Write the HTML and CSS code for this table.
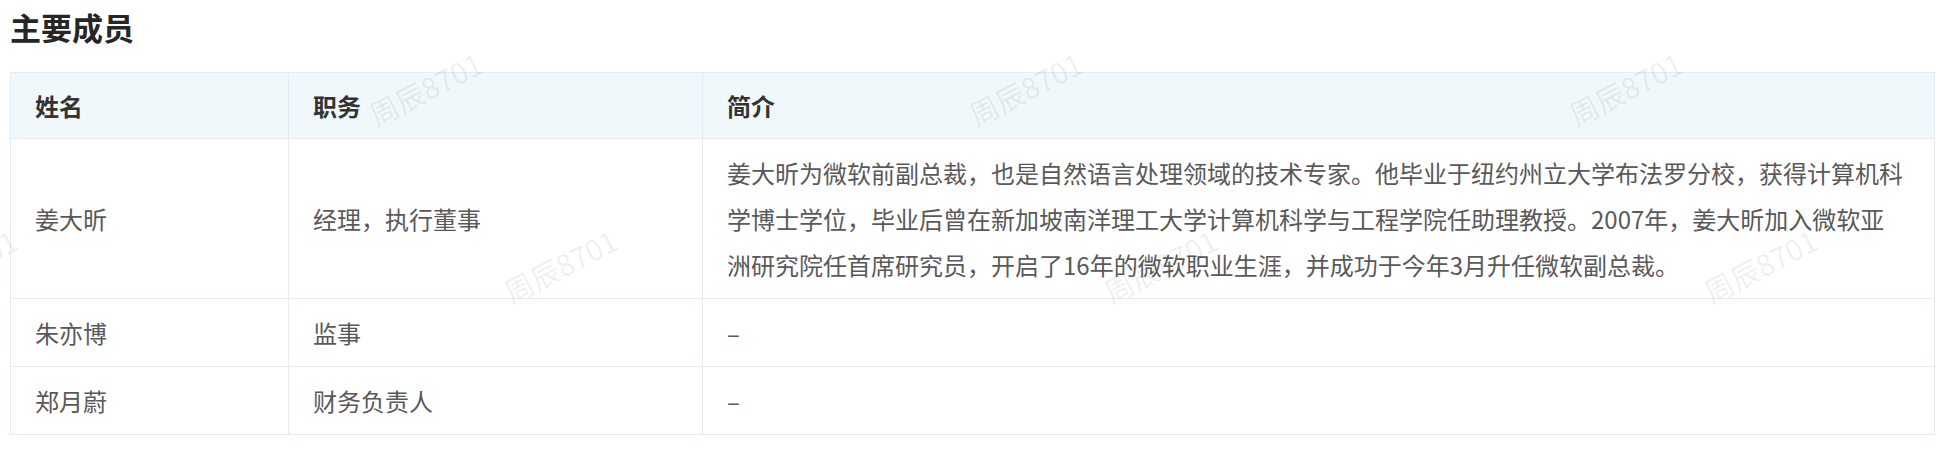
FILE: index.html
```html
<!DOCTYPE html>
<html lang="zh-CN">
<head>
  <meta charset="UTF-8" />
  <meta name="viewport" content="width=device-width, initial-scale=1.0"/>
  <title>主要成员</title>
  <link rel="stylesheet" href="styles.css">
</head>
<body>

  <h2 class="title">主要成员</h2>

  <table class="members">
    <colgroup>
      <col class="col-name">
      <col class="col-role">
      <col>
    </colgroup>
    <thead>
      <tr>
        <th>姓名</th>
        <th>职务</th>
        <th>简介</th>
      </tr>
    </thead>
    <tbody>
      <tr>
        <td>姜大昕</td>
        <td>经理，执行董事</td>
        <td><div class="bio">姜大昕为微软前副总裁，也是自然语言处理领域的技术专家。他毕业于纽约州立大学布法罗分校，获得计算机科学博士学位，毕业后曾在新加坡南洋理工大学计算机科学与工程学院任助理教授。2007年，姜大昕加入微软亚洲研究院任首席研究员，开启了16年的微软职业生涯，并成功于今年3月升任微软副总裁。</div></td>
      </tr>
      <tr>
        <td>朱亦博</td>
        <td>监事</td>
        <td>–</td>
      </tr>
      <tr>
        <td>郑月蔚</td>
        <td>财务负责人</td>
        <td>–</td>
      </tr>
    </tbody>
  </table>

  <!-- watermark layer -->
  <div class="watermarks">
    <div class="wm-row row-a">
      <span class="wm">周辰8701</span>
      <span class="wm">周辰8701</span>
      <span class="wm">周辰8701</span>
    </div>
    <div class="wm-row row-b">
      <span class="wm">周辰8701</span>
      <span class="wm">周辰8701</span>
      <span class="wm">周辰8701</span>
      <span class="wm">周辰8701</span>
    </div>
  </div>

</body>
</html>
```

FILE: styles.css
```css
body {
  font-family: "Noto Sans CJK SC", "Noto Sans", sans-serif;
  background: #fff;
  margin: 0;
  padding: 6px 19px 0 10px;
  color: #333;
  position: relative;
  overflow: hidden;
  height: 452px;
  box-sizing: border-box;
}

.title {
  margin: 0 0 24px;
  font-size: 31px;
  line-height: 42px;
  font-weight: 700;
  color: #262626;
}

.members {
  width: 1925px;
  border-collapse: collapse;
  table-layout: fixed;
}

.col-name {
  width: 278px;
}

.col-role {
  width: 414px;
}

.members th,
.members td {
  border: 1px solid #e4ebf4;
  padding: 10.5px 24px;
  font-size: 24px;
  line-height: 46px;
  text-align: left;
  vertical-align: middle;
}

.members th {
  background: #f1f8fc;
  color: #333;
  font-weight: 700;
  padding: 9.5px 24px;
}

.members td {
  color: #595959;
}

.bio {
  max-width: 1178px;
}

.watermarks {
  position: absolute;
  inset: 0;
  pointer-events: none;
  display: flex;
  flex-direction: column;
  gap: 137px;
  padding-top: 68px;
}

.wm-row {
  display: flex;
  gap: 460px;
  height: 40px;
  align-items: center;
}

.row-a {
  margin-left: 355px;
}

.row-b {
  margin-left: -110px;
}

.wm {
  flex: 0 0 140px;
  text-align: center;
  font-size: 29px;
  color: rgba(0, 0, 0, 0.07);
  white-space: nowrap;
  transform: rotate(-27deg);
}
```
